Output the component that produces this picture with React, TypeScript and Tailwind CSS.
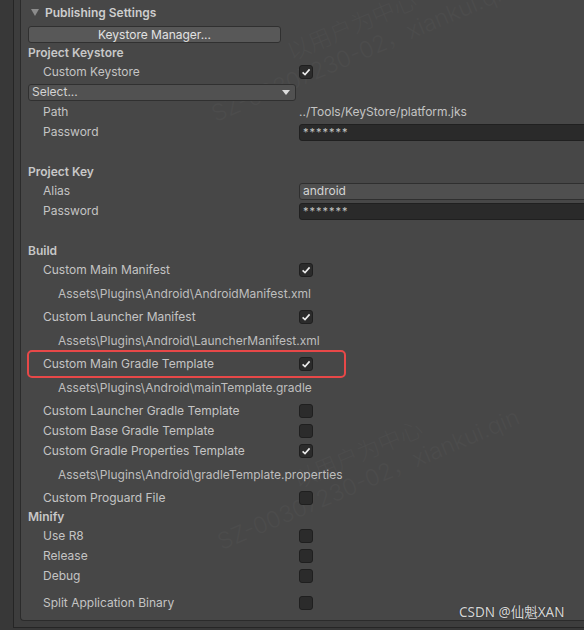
import React from "react";

const FONT = "font-['Inter','Noto_Sans','Noto_Sans_CJK_SC',sans-serif]";

const Check = ({ on }: { on: boolean }) => (
  <div className="w-[14px] h-[14px] rounded-[3px] bg-[#2b2b2b] border border-[#1f1f1f] flex items-center justify-center">
    {on && (
      <svg width="10" height="10" viewBox="0 0 10 10">
        <path d="M1.6 5.4 L4 7.6 L8.6 2.4" fill="none" stroke="#ececec" strokeWidth="1.6" />
      </svg>
    )}
  </div>
);

// a setting row: label column ends at x=299, control after it
const Row = ({
  label,
  h = "h-[20px]",
  children,
}: {
  label: string;
  h?: string;
  children?: React.ReactNode;
}) => (
  <div className={`flex items-center ${h}`}>
    <div className="w-[271px] pl-[15px] text-[12px] text-[#c4c4c4] whitespace-nowrap">{label}</div>
    {children}
  </div>
);

const Header = ({ text, h = "h-[18px]" }: { text: string; h?: string }) => (
  <div className={`flex items-center ${h} text-[12px] font-semibold text-[#c8c8c8]`}>{text}</div>
);

const AssetPath = ({ text }: { text: string }) => (
  <div className="flex items-center h-[27px] pl-[30px] text-[12px] text-[#bebebe] whitespace-nowrap">{text}</div>
);

const Watermark = ({ className }: { className: string }) => (
  <div
    className={`absolute pointer-events-none select-none whitespace-nowrap text-center text-[#4c4c4c] text-[23px] leading-[27px] font-light rotate-[-23deg] origin-top-left ${className}`}
  >
    <div>以用户为中心</div>
    <div>SZ-00307230-02，xiankui.qin</div>
  </div>
);

export default function App() {
  return (
    <div className={`relative w-[584px] h-[630px] overflow-hidden bg-[#383838] pl-[13px] ${FONT}`}>
      <div className="w-[620px] h-[628px] bg-[#3d3d3d] border-l border-b border-[#252525] pl-[6px]">
        <div className="relative h-[621px] bg-[#474747] border-l border-b border-[#2b2b2b] rounded-bl-[4px] pl-[7px]">
          <Watermark className="left-[176px] top-[78px]" />
          <Watermark className="left-[182px] top-[506px]" />

          <div className="relative flex flex-col">
            {/* foldout header */}
            <div className="flex items-center h-[25px] pl-[3px] gap-[6px] text-[12px] font-semibold text-[#cdcdcd]">
              <svg width="8" height="7" viewBox="0 0 8 7">
                <path d="M0 0 H8 L4 7 Z" fill="#8c8c8c" />
              </svg>
              <span>Publishing Settings</span>
            </div>

            <div className="h-[19px] pt-[1px]">
              <div className="w-[253px] h-[17px] rounded-[3px] bg-[#585858] border border-[#303030] flex items-center justify-center text-[12px] text-[#e2e2e2]">
                Keystore Manager...
              </div>
            </div>

            <Header text="Project Keystore" />
            <Row label="Custom Keystore">
              <Check on />
            </Row>
            <div className="flex items-center h-[20px]">
              <div className="w-[268px] h-[17px] rounded-[3px] bg-[#515151] border border-[#303030] flex items-center justify-between pl-[3px] pr-[5px] text-[12px] text-[#d4d4d4]">
                <span>Select...</span>
                <svg width="8" height="5" viewBox="0 0 8 5">
                  <path d="M0 0 H8 L4 5 Z" fill="#dcdcdc" />
                </svg>
              </div>
            </div>
            <Row label="Path">
              <span className="text-[12px] text-[#c4c4c4] whitespace-nowrap">../Tools/KeyStore/platform.jks</span>
            </Row>
            <Row label="Password">
              <div className="w-[300px] h-[17px] rounded-[3px] bg-[#2a2a2a] border border-[#202020] flex items-center pl-[3px] text-[11px] text-[#c4c4c4] tracking-[1px]">
                *******
              </div>
            </Row>

            <div className="h-[21px]" />
            <Header text="Project Key" />
            <Row label="Alias">
              <div className="w-[300px] h-[17px] rounded-[3px] bg-[#4f4f4f] border border-[#2f2f2f] flex items-center pl-[3px] text-[12px] text-[#d4d4d4]">
                android
              </div>
            </Row>
            <Row label="Password">
              <div className="w-[300px] h-[17px] rounded-[3px] bg-[#2a2a2a] border border-[#202020] flex items-center pl-[3px] text-[11px] text-[#c4c4c4] tracking-[1px]">
                *******
              </div>
            </Row>

            <div className="h-[21px]" />
            <Header text="Build" />
            <Row label="Custom Main Manifest">
              <Check on />
            </Row>
            <AssetPath text="Assets\Plugins\Android\AndroidManifest.xml" />
            <Row label="Custom Launcher Manifest">
              <Check on />
            </Row>
            <AssetPath text="Assets\Plugins\Android\LauncherManifest.xml" />
            <div className="relative">
              <Row label="Custom Main Gradle Template">
                <Check on />
              </Row>
              <div className="absolute left-[-1px] top-[-4px] w-[319px] h-[28px] rounded-[5px] border-[2.5px] border-[#e84848]" />
            </div>
            <AssetPath text="Assets\Plugins\Android\mainTemplate.gradle" />
            <Row label="Custom Launcher Gradle Template">
              <Check on={false} />
            </Row>
            <Row label="Custom Base Gradle Template">
              <Check on={false} />
            </Row>
            <Row label="Custom Gradle Properties Template">
              <Check on />
            </Row>
            <AssetPath text="Assets\Plugins\Android\gradleTemplate.properties" />
            <Row label="Custom Proguard File">
              <Check on={false} />
            </Row>

            <Header text="Minify" />
            <Row label="Use R8">
              <Check on={false} />
            </Row>
            <Row label="Release">
              <Check on={false} />
            </Row>
            <Row label="Debug">
              <Check on={false} />
            </Row>
            <div className="h-[7px]" />
            <Row label="Split Application Binary">
              <Check on={false} />
            </Row>
          </div>
        </div>
      </div>

      <div className="absolute left-[459px] top-[602px] text-[13.5px] text-[#d6d6d6] font-['Noto_Sans','Noto_Sans_CJK_SC',sans-serif] [text-shadow:0_0_1px_#222] whitespace-nowrap">
        CSDN @仙魁XAN
      </div>
    </div>
  );
}
